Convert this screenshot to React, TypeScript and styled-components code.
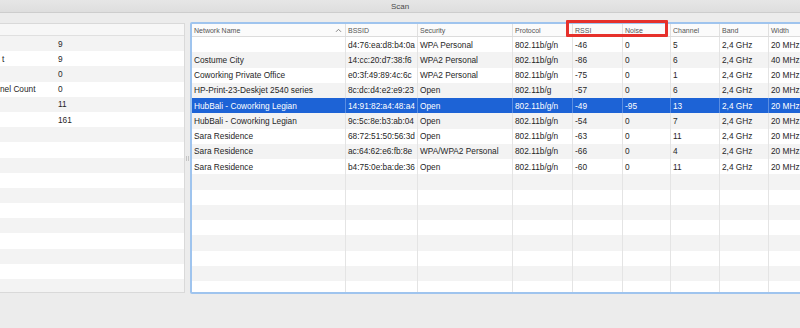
import React from "react";
import styled, { createGlobalStyle } from "styled-components";

const GlobalStyle = createGlobalStyle`
  html, body {
    margin: 0;
    padding: 0;
    background: #ececec;
  }
  body {
    font-family: "Liberation Sans", Arial, sans-serif;
  }
`;

const Window = styled.div`
  position: relative;
  width: 800px;
  height: 328px;
  overflow: hidden;
  background: #ececec;
  display: flex;
  flex-direction: column;
`;

const TitleBar = styled.div`
  height: 12px;
  flex: 0 0 12px;
  background: linear-gradient(#e6e6e6, #dedede);
  border-bottom: 1px solid #cdcdcd;
  display: flex;
  justify-content: center;
  align-items: center;
  font-size: 8px;
  color: #4a4a4a;
`;

const Main = styled.div`
  display: flex;
  padding-top: 9px;
  height: 272px;
`;

const SummaryPanel = styled.div`
  margin-left: -1px;
  margin-top: 1px;
  width: 184px;
  flex: 0 0 184px;
  height: 268px;
  border: 1px solid #d9d9d9;
  background: #fff;
  overflow: hidden;
`;

const SummaryHeader = styled.div`
  height: 11px;
  background: #f7f7f7;
  border-bottom: 1px solid #e0e0e0;
`;

const SummaryRow = styled.div<{ $odd: boolean }>`
  display: grid;
  grid-template-columns: 58px 1fr;
  height: 15.2px;
  align-items: center;
  background: ${(p) => (p.$odd ? "#ffffff" : "#f3f3f3")};
  font-size: 8.3px;
  color: #262626;
  white-space: nowrap;
`;

const SummaryLabel = styled.span<{ $indent: number }>`
  padding-left: ${(p) => p.$indent}px;
`;

const Splitter = styled.div`
  flex: 0 0 5px;
  display: flex;
  align-items: center;
  justify-content: center;
`;

const Grip = styled.div`
  width: 0;
  height: 5px;
  padding: 0 0.5px;
  border-left: 1px solid #c4c4c4;
  border-right: 1px solid #c4c4c4;
`;

const TablePanel = styled.div`
  flex: 0 0 640px;
  height: 268px;
  border: 2px solid #9fc4ee;
  border-radius: 2px;
  background: #fff;
  overflow: hidden;
`;

const columns = "154px 72px 95px 60px 50px 48px 49px 49px 63px";

const HeaderRow = styled.div`
  display: grid;
  grid-template-columns: ${columns};
  height: 12px;
  background: #fbfbfb;
  border-bottom: 1px solid #dcdcdc;
`;

const HeaderCell = styled.div`
  display: flex;
  align-items: center;
  justify-content: space-between;
  padding: 0 3px 0 2px;
  border-right: 1px solid #e0e0e0;
  font-size: 7px;
  color: #555;
  white-space: nowrap;
  overflow: hidden;
`;

const Row = styled.div<{ $odd: boolean; $selected?: boolean }>`
  display: grid;
  grid-template-columns: ${columns};
  height: 15.25px;
  background: ${(p) =>
    p.$selected ? "#1d63d6" : p.$odd ? "#f3f3f3" : "#ffffff"};
  color: ${(p) => (p.$selected ? "#ffffff" : "#262626")};
`;

const Cell = styled.div<{ $selected?: boolean }>`
  display: flex;
  align-items: center;
  padding: 0 2px 0 2px;
  border-right: 1px solid
    ${(p) => (p.$selected ? "rgba(255,255,255,0.28)" : "#e4e4e4")};
  font-size: 8.3px;
  white-space: nowrap;
  overflow: hidden;
`;

const Highlight = styled.div`
  position: absolute;
  left: 566px;
  top: 20px;
  width: 96px;
  height: 11px;
  border: 3px solid #e6302b;
  border-radius: 1px;
`;

// the sidebar is scrolled so that only the tail of its labels shows
const summary: [string, string, number][] = [
  ["", "9", 0],
  ["t", "9", 2],
  ["", "0", 0],
  ["nel Count", "0", 0],
  ["", "11", 0],
  ["", "161", 0],
];

const headers = [
  "Network Name",
  "BSSID",
  "Security",
  "Protocol",
  "RSSI",
  "Noise",
  "Channel",
  "Band",
  "Width",
];

const networks: string[][] = [
  ["", "d4:76:ea:d8:b4:0a", "WPA Personal", "802.11b/g/n", "-46", "0", "5", "2,4 GHz", "20 MHz"],
  ["Costume City", "14:cc:20:d7:38:f6", "WPA2 Personal", "802.11b/g/n", "-86", "0", "6", "2,4 GHz", "40 MHz"],
  ["Coworking Private Office", "e0:3f:49:89:4c:6c", "WPA2 Personal", "802.11b/g/n", "-75", "0", "1", "2,4 GHz", "20 MHz"],
  ["HP-Print-23-Deskjet 2540 series", "8c:dc:d4:e2:e9:23", "Open", "802.11b/g", "-57", "0", "6", "2,4 GHz", "20 MHz"],
  ["HubBali - Coworking Legian", "14:91:82:a4:48:a4", "Open", "802.11b/g/n", "-49", "-95", "13", "2,4 GHz", "20 MHz"],
  ["HubBali - Coworking Legian", "9c:5c:8e:b3:ab:04", "Open", "802.11b/g/n", "-54", "0", "7", "2,4 GHz", "20 MHz"],
  ["Sara Residence", "68:72:51:50:56:3d", "Open", "802.11b/g/n", "-63", "0", "11", "2,4 GHz", "20 MHz"],
  ["Sara Residence", "ac:64:62:e6:fb:8e", "WPA/WPA2 Personal", "802.11b/g/n", "-66", "0", "4", "2,4 GHz", "20 MHz"],
  ["Sara Residence", "b4:75:0e:ba:de:36", "Open", "802.11b/g/n", "-60", "0", "11", "2,4 GHz", "20 MHz"],
];

const SELECTED = 4;
const TOTAL_ROWS = 17;

const SortArrow = () => (
  <svg width="7" height="5" viewBox="0 0 7 5">
    <path d="M1 3.8 L3.5 1.3 L6 3.8" fill="none" stroke="#777" strokeWidth="0.9" />
  </svg>
);

const App: React.FC = () => {
  const rows = Array.from({ length: TOTAL_ROWS }, (_, i) => networks[i] ?? null);

  return (
    <Window>
      <GlobalStyle />
      <TitleBar>Scan</TitleBar>
      <Main>
        <SummaryPanel>
          <SummaryHeader />
          {Array.from({ length: 17 }, (_, i) => (
            <SummaryRow key={i} $odd={i % 2 === 1}>
              <SummaryLabel $indent={summary[i]?.[2] ?? 0}>
                {summary[i]?.[0] ?? ""}
              </SummaryLabel>
              <span>{summary[i]?.[1] ?? ""}</span>
            </SummaryRow>
          ))}
        </SummaryPanel>
        <Splitter>
          <Grip />
        </Splitter>
        <TablePanel>
          <HeaderRow>
            {headers.map((h, i) => (
              <HeaderCell key={h}>
                <span>{h}</span>
                {i === 0 && <SortArrow />}
              </HeaderCell>
            ))}
          </HeaderRow>
          {rows.map((r, i) => {
            const selected = i === SELECTED;
            return (
              <Row key={i} $odd={i % 2 === 1} $selected={selected}>
                {headers.map((_, c) => (
                  <Cell key={c} $selected={selected}>
                    {r ? r[c] : ""}
                  </Cell>
                ))}
              </Row>
            );
          })}
        </TablePanel>
      </Main>
      <Highlight />
    </Window>
  );
};

export default App;
